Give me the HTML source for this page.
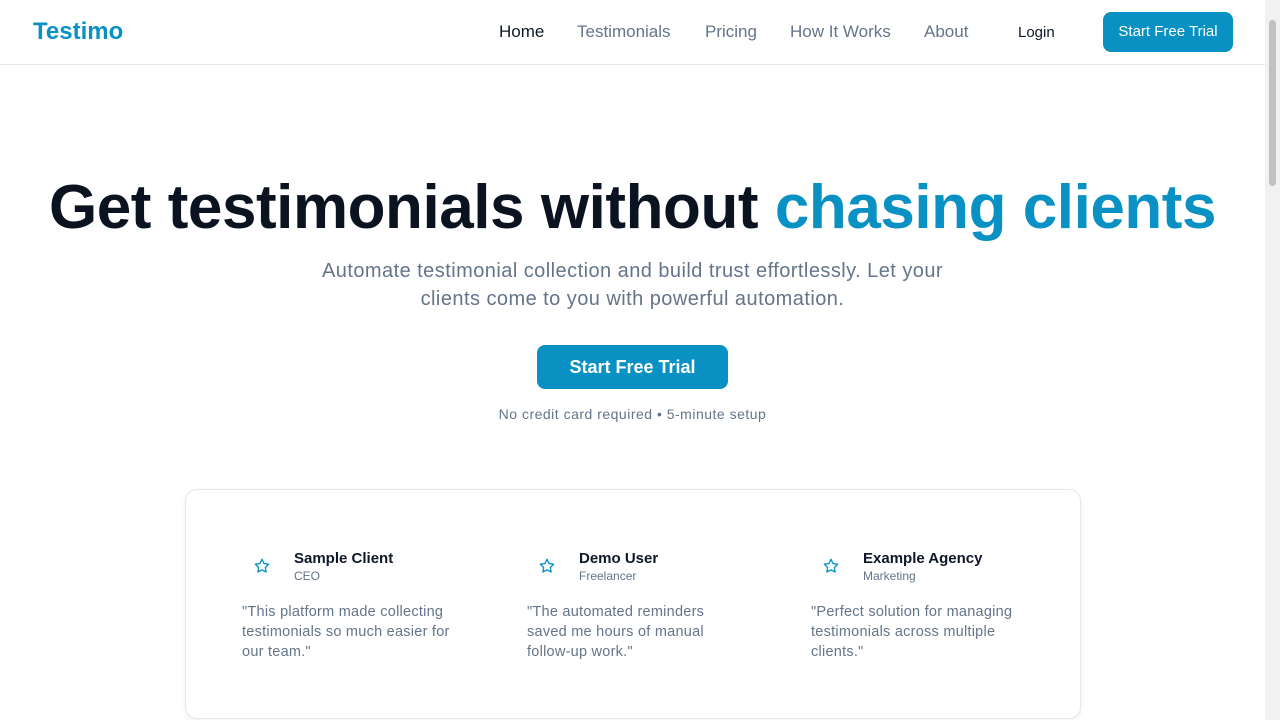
<!DOCTYPE html>
<html><head><meta charset="utf-8"><style>
*{box-sizing:border-box;margin:0;padding:0}
body{width:1280px;height:720px;overflow:hidden;background:#fff;font-family:"Liberation Sans",sans-serif;position:relative}
.nav{position:absolute;left:0;top:0;width:1265px;height:65px;border-bottom:1px solid #e2e8f0;background:#fff}
.logo{position:absolute;left:33px;top:18px;font-size:24px;font-weight:700;color:#0891c2}
.links a{position:absolute;top:22px;font-size:17px;color:#64748b;text-decoration:none}
.login{position:absolute;left:1018px;top:24px;font-size:15px;color:#0f172a}
.btn{position:absolute;left:1103px;top:12px;width:130px;height:40px;border-radius:8px;background:#0891c2;color:#fff;font-size:15px;text-align:center;line-height:40px}
h1{position:absolute;left:0;width:1265px;top:172px;text-align:center;font-size:62px;letter-spacing:-0.45px;font-weight:700;color:#0b1220;white-space:nowrap}
h1 span{color:#0891c2}
.sub{position:absolute;left:250px;width:765px;top:257px;text-align:center;font-size:20px;letter-spacing:0.45px;line-height:28px;color:#64748b;white-space:nowrap}
.cta{position:absolute;left:537px;top:345px;width:191px;height:44px;border-radius:8px;background:#0891c2;color:#fff;font-size:18px;font-weight:700;text-align:center;line-height:44px}
.note{position:absolute;left:0;width:1265px;top:406px;text-align:center;font-size:14px;letter-spacing:0.5px;color:#64748b}
.card{position:absolute;left:185px;top:489px;width:896px;height:230px;border:1px solid #e2e8f0;border-radius:12px;box-shadow:0 2px 6px rgba(0,0,0,.06);background:#fff}
.t{position:absolute;top:549px;width:230px}
.t svg{position:absolute;left:12px;top:9px}
.name{position:absolute;left:52px;top:1px;font-size:15px;font-weight:700;color:#0f172a;white-space:nowrap}
.role{position:absolute;left:52px;top:20px;font-size:12px;color:#64748b}
.q{position:absolute;left:0;top:53px;width:225px;font-size:14.5px;letter-spacing:0.25px;line-height:20px;color:#64748b}
.sb{position:absolute;right:0;top:0;width:15px;height:720px;background:#f1f1f1}
.sb div{position:absolute;left:4px;top:20px;width:7px;height:166px;border-radius:4px;background:#c1c1c1}
</style></head><body>
<div class="nav">
<div class="logo">Testimo</div>
<div class="links">
<a style="left:499px;color:#0f172a">Home</a>
<a style="left:577px">Testimonials</a>
<a style="left:705px">Pricing</a>
<a style="left:790px">How It Works</a>
<a style="left:924px">About</a>
</div>
<div class="login">Login</div>
<div class="btn">Start Free Trial</div>
</div>
<h1>Get testimonials without <span>chasing clients</span></h1>
<div class="sub">Automate testimonial collection and build trust effortlessly. Let your<br>clients come to you with powerful automation.</div>
<div class="cta">Start Free Trial</div>
<div class="note">No credit card required • 5-minute setup</div>
<div class="card"></div>
<div class="t" style="left:242px"><svg width="16" height="16" viewBox="0 0 24 24" fill="none" stroke="#0891c2" stroke-width="2" stroke-linejoin="round"><path d="M12 2l3.1 6.3 6.9 1-5 4.9 1.2 6.8L12 17.8 5.8 21l1.2-6.8-5-4.9 6.9-1z"/></svg><div class="name">Sample Client</div><div class="role">CEO</div><div class="q">"This platform made collecting<br>testimonials so much easier for<br>our team."</div></div>
<div class="t" style="left:527px"><svg width="16" height="16" viewBox="0 0 24 24" fill="none" stroke="#0891c2" stroke-width="2" stroke-linejoin="round"><path d="M12 2l3.1 6.3 6.9 1-5 4.9 1.2 6.8L12 17.8 5.8 21l1.2-6.8-5-4.9 6.9-1z"/></svg><div class="name">Demo User</div><div class="role">Freelancer</div><div class="q">"The automated reminders<br>saved me hours of manual<br>follow-up work."</div></div>
<div class="t" style="left:811px"><svg width="16" height="16" viewBox="0 0 24 24" fill="none" stroke="#0891c2" stroke-width="2" stroke-linejoin="round"><path d="M12 2l3.1 6.3 6.9 1-5 4.9 1.2 6.8L12 17.8 5.8 21l1.2-6.8-5-4.9 6.9-1z"/></svg><div class="name">Example Agency</div><div class="role">Marketing</div><div class="q">"Perfect solution for managing<br>testimonials across multiple<br>clients."</div></div>
<div class="sb"><div></div></div>
</body></html>
